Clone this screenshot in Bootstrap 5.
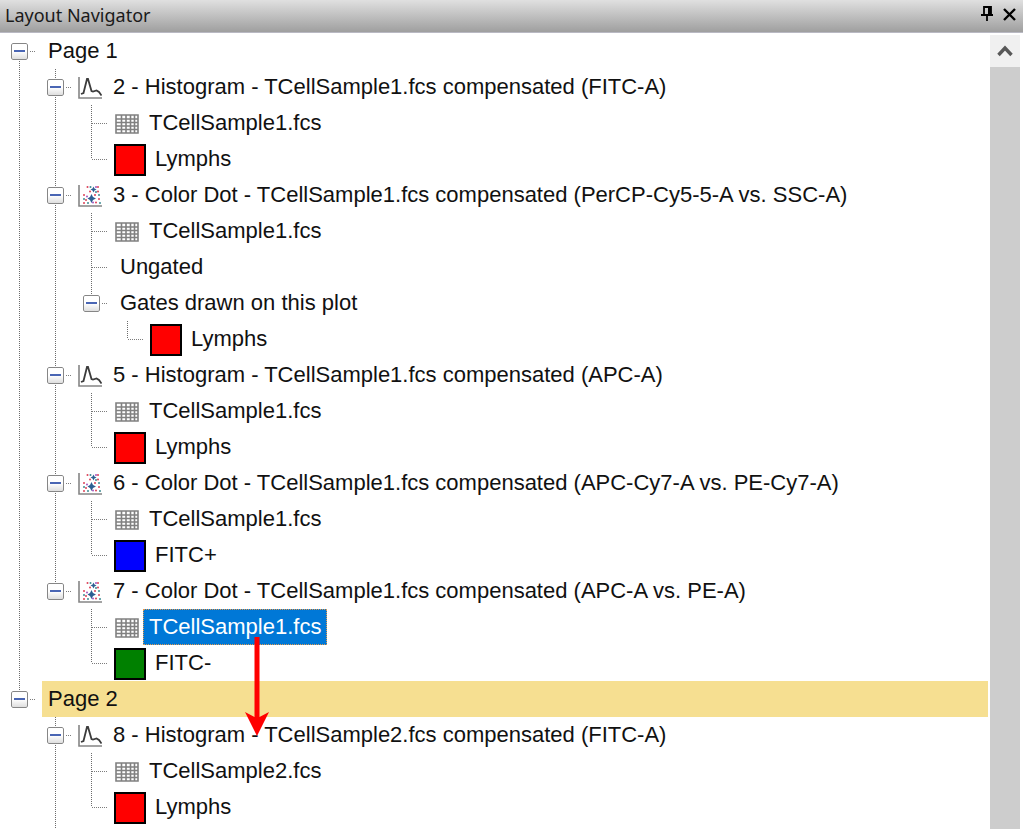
<!DOCTYPE html>
<html lang="en">
<head>
<meta charset="utf-8">
<meta name="viewport" content="width=device-width, initial-scale=1">
<title>Layout Navigator</title>
<link href="https://cdn.jsdelivr.net/npm/bootstrap@5.3.0/dist/css/bootstrap.min.css" rel="stylesheet">
<style>
  body { font-family: "Liberation Sans", Arial, sans-serif; font-size: 22px; line-height: 36px; color: #111; background: #fff; }
  .titlebar { height: 33px; background: linear-gradient(#e0e0e0, #9f9f9f); border-bottom: 1px solid #b9b9c3; }
  .titlebar h1 { font: 18px/30px "Noto Sans", "Open Sans", sans-serif; color: #1a1a1a; padding-left: 5px; }
  .tool { width: 18px; height: 28px; }
  .tree { padding-left: 2px; padding-right: 2px; }
  .node { height: 36px; white-space: nowrap; }
  /* One 36px column per level; the connector is drawn as dotted background layers. */
  .rail { --v: repeating-linear-gradient(#6c6c6c 0 1px, transparent 1px 2px); --h: repeating-linear-gradient(90deg, #7c7c7c 0 1px, transparent 1px 2px);
    flex: 0 0 36px; height: 36px; background-repeat: no-repeat; }
  .rail.pass { background-image: var(--v); background-size: 1px 36px; background-position: 17px 0; }
  .rail.tee { background-image: var(--v), var(--h); background-size: 1px 36px, 16px 1px; background-position: 17px 0, 18px 18px; }
  .rail.end { background-image: var(--v), var(--h); background-size: 1px 18px, 16px 1px; background-position: 17px 0, 18px 18px; }
  .rail.first { background-image: var(--v), var(--h); background-size: 1px 18px, 16px 1px; background-position: 17px 18px, 18px 18px; }
  .fold { width: 17px; height: 17px; margin-right: 1px; border: 1px solid #868686; border-radius: 2px; background: linear-gradient(#fff 50%, #dedede); outline: 1px solid #fff; }
  .fold::before { content: ""; width: 11px; height: 2px; background: #4a66b4; }
  .plot { flex: 0 0 24px; width: 24px; height: 24px; margin: 2px 5px 0 4px; }
  .sheet { flex: 0 0 24px; width: 24px; height: 20px; margin: 2px 4px 0 5px; }
  .swatch { flex: 0 0 32px; height: 32px; border: 2px solid #000; margin: 2px 3px 0 4px; }
  .caption { color: inherit; padding: 0 6px; height: 36px; }
  .under { margin-left: 4px; }
  .chosen { background: #0078d7; color: #fff; outline: 1px dotted #e39a4e; outline-offset: -1px; }
  .drop { background: #f6df91; }
  .drag { left: 101px; top: 28px; z-index: 2; }
  .scroller { flex: 0 0 33px; padding: 2px 3px 0 0; }
  .scroller button { height: 32px; background: #f0f0f0; }
  .thumb { background: #cdcdcd; }
</style>
<script src="https://cdn.jsdelivr.net/npm/bootstrap@5.3.0/dist/js/bootstrap.bundle.min.js"></script>
</head>
<body class="vh-100 d-flex flex-column overflow-hidden">
<svg width="0" height="0" class="position-absolute" aria-hidden="true">
  <symbol id="hist" viewBox="0 0 24 24">
    <path d="M1 1V22H24" fill="none" stroke="#858585" stroke-width="1.6"/>
    <path d="M3 18L5.500 17L9 3H10L13.500 15L15 15.500L18.500 14.500L21 16L23.500 19.500" fill="none" stroke="#3c3c3c" stroke-width="1.8"/>
  </symbol>
  <symbol id="dots" viewBox="0 0 24 24">
    <path d="M1 1V22H24" fill="none" stroke="#858585" stroke-width="1.6"/>
    <path d="M15.500 2.500L16.500 4.500L18.500 5.500L16.500 6.500L15.500 8.500L14.500 6.500L12.500 5.500L14.500 4.500ZM13.500 10L15 13L18 14.500L15 16L13.500 19L12 16L9.500 14.500L12 13Z" fill="#2d5f92"/>
    <g fill="#dc4057"><circle cx="9.500" cy="3" r="1"/><circle cx="20" cy="3" r="1"/><circle cx="12" cy="7.500" r="1"/><circle cx="20" cy="7.500" r="1"/><circle cx="6" cy="11" r="1"/><circle cx="17" cy="11" r="1"/><circle cx="21" cy="15" r="1"/><circle cx="8" cy="16" r="1"/><circle cx="6" cy="19" r="1"/><circle cx="18" cy="18.500" r="1"/></g>
    <g fill="#3c8c93"><circle cx="12.500" cy="3" r="1"/><circle cx="18" cy="8" r="1"/><circle cx="21" cy="11" r="1"/><circle cx="10" cy="19" r="1"/><circle cx="22" cy="19" r="1"/><circle cx="6" cy="15" r="1"/></g>
    <g fill="#a356c0"><circle cx="9" cy="12.500" r="1"/><circle cx="18" cy="3" r="1"/><circle cx="15" cy="18.500" r="1"/></g>
  </symbol>
  <symbol id="sheet" viewBox="0 0 24 20">
    <path d="M1 1H23V19H1Z" fill="#fff"/>
    <path d="M1 1H23V19H1ZM6.500 1V19M11 1V19M15.500 1V19M19.500 1V19M1 5H23M1 8.500H23M1 12H23M1 15.500H23" fill="none" stroke="#808080" stroke-width="1.6"/>
  </symbol>
</svg>

<header class="titlebar d-flex flex-shrink-0 align-items-start">
  <h1 class="m-0 me-auto">Layout Navigator</h1>
  <button type="button" class="tool btn p-0 border-0 rounded-0 d-flex align-items-center justify-content-center" aria-label="Pin panel">
    <svg width="14" height="16" viewBox="0 0 14 16"><path d="M3 1H10V9H3ZM0 9H12M6 9V15" fill="none" stroke="#000" stroke-width="1.8"/><path d="M7 1H10V9H7Z"/></svg>
  </button>
  <button type="button" class="tool btn p-0 border-0 rounded-0 d-flex align-items-center justify-content-center ms-1 me-1" aria-label="Close panel">
    <svg width="14" height="14" viewBox="0 0 14 14"><path d="M1 2L12 13M12 2L1 13" stroke="#000" stroke-width="2.4"/></svg>
  </button>
</header>

<div class="d-flex flex-grow-1 overflow-hidden">
<main class="tree flex-grow-1 overflow-hidden">
  <ul class="list-unstyled m-0">
    <li>
      <div class="node d-flex align-items-center"><span class="rail first d-flex align-items-center justify-content-center"><button type="button" class="fold p-0 d-flex align-items-center justify-content-center" aria-label="Collapse Page 1"></button></span><span class="caption under flex-grow-1">Page 1</span></div>
      <ul class="list-unstyled m-0">
        <li>
          <div class="node d-flex align-items-center"><span class="rail pass"></span><span class="rail tee d-flex align-items-center justify-content-center"><button type="button" class="fold p-0 d-flex align-items-center justify-content-center" aria-label="Collapse plot 2"></button></span><svg class="plot"><use href="#hist"/></svg><span class="caption">2 - Histogram - TCellSample1.fcs compensated (FITC-A)</span></div>
          <ul class="list-unstyled m-0">
            <li class="node d-flex align-items-center"><span class="rail pass"></span><span class="rail pass"></span><span class="rail tee"></span><svg class="sheet"><use href="#sheet"/></svg><span class="caption">TCellSample1.fcs</span></li>
            <li class="node d-flex align-items-center"><span class="rail pass"></span><span class="rail pass"></span><span class="rail end"></span><span class="swatch" style="background:#f00"></span><span class="caption">Lymphs</span></li>
          </ul>
        </li>
        <li>
          <div class="node d-flex align-items-center"><span class="rail pass"></span><span class="rail tee d-flex align-items-center justify-content-center"><button type="button" class="fold p-0 d-flex align-items-center justify-content-center" aria-label="Collapse plot 3"></button></span><svg class="plot"><use href="#dots"/></svg><span class="caption">3 - Color Dot - TCellSample1.fcs compensated (PerCP-Cy5-5-A vs. SSC-A)</span></div>
          <ul class="list-unstyled m-0">
            <li class="node d-flex align-items-center"><span class="rail pass"></span><span class="rail pass"></span><span class="rail tee"></span><svg class="sheet"><use href="#sheet"/></svg><span class="caption">TCellSample1.fcs</span></li>
            <li class="node d-flex align-items-center"><span class="rail pass"></span><span class="rail pass"></span><span class="rail tee"></span><span class="caption under">Ungated</span></li>
            <li>
              <div class="node d-flex align-items-center"><span class="rail pass"></span><span class="rail pass"></span><span class="rail end d-flex align-items-center justify-content-center"><button type="button" class="fold p-0 d-flex align-items-center justify-content-center" aria-label="Collapse gates"></button></span><span class="caption under">Gates drawn on this plot</span></div>
              <ul class="list-unstyled m-0">
                <li class="node d-flex align-items-center"><span class="rail pass"></span><span class="rail pass"></span><span class="rail"></span><span class="rail end"></span><span class="swatch" style="background:#f00"></span><span class="caption">Lymphs</span></li>
              </ul>
            </li>
          </ul>
        </li>
        <li>
          <div class="node d-flex align-items-center"><span class="rail pass"></span><span class="rail tee d-flex align-items-center justify-content-center"><button type="button" class="fold p-0 d-flex align-items-center justify-content-center" aria-label="Collapse plot 5"></button></span><svg class="plot"><use href="#hist"/></svg><span class="caption">5 - Histogram - TCellSample1.fcs compensated (APC-A)</span></div>
          <ul class="list-unstyled m-0">
            <li class="node d-flex align-items-center"><span class="rail pass"></span><span class="rail pass"></span><span class="rail tee"></span><svg class="sheet"><use href="#sheet"/></svg><span class="caption">TCellSample1.fcs</span></li>
            <li class="node d-flex align-items-center"><span class="rail pass"></span><span class="rail pass"></span><span class="rail end"></span><span class="swatch" style="background:#f00"></span><span class="caption">Lymphs</span></li>
          </ul>
        </li>
        <li>
          <div class="node d-flex align-items-center"><span class="rail pass"></span><span class="rail tee d-flex align-items-center justify-content-center"><button type="button" class="fold p-0 d-flex align-items-center justify-content-center" aria-label="Collapse plot 6"></button></span><svg class="plot"><use href="#dots"/></svg><span class="caption">6 - Color Dot - TCellSample1.fcs compensated (APC-Cy7-A vs. PE-Cy7-A)</span></div>
          <ul class="list-unstyled m-0">
            <li class="node d-flex align-items-center"><span class="rail pass"></span><span class="rail pass"></span><span class="rail tee"></span><svg class="sheet"><use href="#sheet"/></svg><span class="caption">TCellSample1.fcs</span></li>
            <li class="node d-flex align-items-center"><span class="rail pass"></span><span class="rail pass"></span><span class="rail end"></span><span class="swatch" style="background:#00f"></span><span class="caption">FITC+</span></li>
          </ul>
        </li>
        <li>
          <div class="node d-flex align-items-center"><span class="rail pass"></span><span class="rail end d-flex align-items-center justify-content-center"><button type="button" class="fold p-0 d-flex align-items-center justify-content-center" aria-label="Collapse plot 7"></button></span><svg class="plot"><use href="#dots"/></svg><span class="caption">7 - Color Dot - TCellSample1.fcs compensated (APC-A vs. PE-A)</span></div>
          <ul class="list-unstyled m-0">
            <li class="node d-flex align-items-center"><span class="rail pass"></span><span class="rail"></span><span class="rail tee"></span><svg class="sheet"><use href="#sheet"/></svg><span class="caption chosen position-relative">TCellSample1.fcs<svg class="drag position-absolute" width="26" height="100" viewBox="0 0 26 100" role="img" aria-label="Drag to Page 2"><path d="M10.500 0H15.500V80L25 75L13 99L1 75L10.500 80Z" fill="#f00"/></svg></span></li>
            <li class="node d-flex align-items-center"><span class="rail pass"></span><span class="rail"></span><span class="rail end"></span><span class="swatch" style="background:#008000"></span><span class="caption">FITC-</span></li>
          </ul>
        </li>
      </ul>
    </li>
    <li>
      <div class="node d-flex align-items-center"><span class="rail end d-flex align-items-center justify-content-center"><button type="button" class="fold p-0 d-flex align-items-center justify-content-center" aria-label="Collapse Page 2"></button></span><span class="caption under drop flex-grow-1">Page 2</span></div>
      <ul class="list-unstyled m-0">
        <li>
          <div class="node d-flex align-items-center"><span class="rail"></span><span class="rail tee d-flex align-items-center justify-content-center"><button type="button" class="fold p-0 d-flex align-items-center justify-content-center" aria-label="Collapse plot 8"></button></span><svg class="plot"><use href="#hist"/></svg><span class="caption">8 - Histogram - TCellSample2.fcs compensated (FITC-A)</span></div>
          <ul class="list-unstyled m-0">
            <li class="node d-flex align-items-center"><span class="rail"></span><span class="rail pass"></span><span class="rail tee"></span><svg class="sheet"><use href="#sheet"/></svg><span class="caption">TCellSample2.fcs</span></li>
            <li class="node d-flex align-items-center"><span class="rail"></span><span class="rail pass"></span><span class="rail end"></span><span class="swatch" style="background:#f00"></span><span class="caption">Lymphs</span></li>
          </ul>
        </li>
        <li class="node d-flex" aria-hidden="true"><span class="rail"></span><span class="rail pass"></span></li>
      </ul>
    </li>
  </ul>
</main>
<aside class="scroller d-flex flex-column" aria-label="Scroll">
  <button type="button" class="border-0 p-0 d-flex align-items-center justify-content-center flex-shrink-0" aria-label="Scroll up"><svg width="16" height="12" viewBox="0 0 16 12"><path d="M1.500 10L8 3L14.500 10" fill="none" stroke="#585858" stroke-width="3.4"/></svg></button>
  <div class="thumb flex-grow-1"></div>
</aside>
</div>
</body>
</html>
